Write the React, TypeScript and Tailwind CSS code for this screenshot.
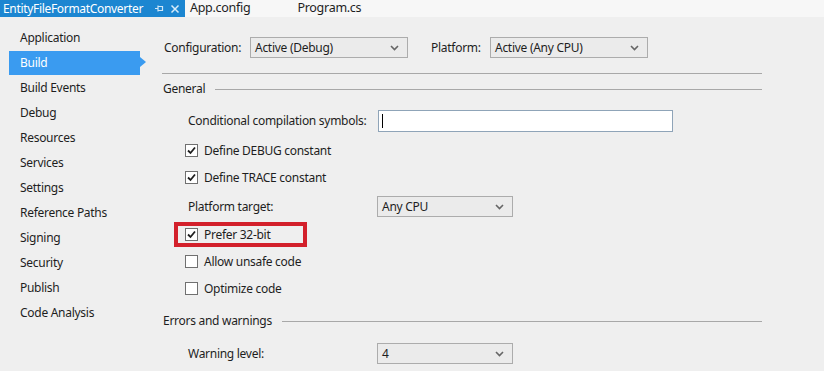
import { useState } from 'react';

const pages = [
  'Application',
  'Build',
  'Build Events',
  'Debug',
  'Resources',
  'Services',
  'Settings',
  'Reference Paths',
  'Signing',
  'Security',
  'Publish',
  'Code Analysis',
];

const Chevron = () => (
  <svg width="9" height="6" viewBox="0 0 9 6" className="shrink-0">
    <path d="M1 1 L4.5 4.5 L8 1" fill="none" stroke="#666" strokeWidth="1.6" />
  </svg>
);

const Dropdown = ({ value, className }: { value: string; className: string }) => (
  <div
    className={`h-[21px] flex items-center justify-between border border-[#acacac] bg-[#ebebeb] pl-[4px] pr-[8px] ${className}`}
  >
    <span>{value}</span>
    <Chevron />
  </div>
);

const Check = ({ checked }: { checked: boolean }) => (
  <div className="w-[13px] h-[13px] border border-[#707070] bg-white flex items-center justify-center shrink-0">
    {checked && (
      <svg width="9" height="9" viewBox="0 0 9 9">
        <path d="M1 4.5 L3.5 7 L8 1.5" fill="none" stroke="#1e1e1e" strokeWidth="1.8" />
      </svg>
    )}
  </div>
);

const CheckRow = ({ label, checked }: { label: string; checked: boolean }) => (
  <div className="h-[27px] flex items-center pl-[23px] gap-[6px]">
    <Check checked={checked} />
    <span>{label}</span>
  </div>
);

const Section = ({ title }: { title: string }) => (
  <div className="h-[16px] flex items-center pl-[1px]">
    <span>{title}</span>
    <div className="flex-1 h-px bg-[#a8a8a8] ml-[10px]" />
  </div>
);

export default function App() {
  const [active, setActive] = useState(1);

  return (
    <div className="w-[824px] h-[371px] overflow-hidden bg-[#efefef] text-[12px] tracking-[-0.28px] text-[#1e1e1e] font-['Noto_Sans',sans-serif] leading-none">
      {/* document tabs */}
      <div className="h-[17px] flex items-center bg-[#f7f7f7] text-[12.5px]">
        <div className="h-full w-[185px] shrink-0 bg-[#1c86d1] text-white flex items-center pl-[3px]">
          <span className="text-[12px] tracking-[-0.32px]">EntityFileFormatConverter</span>
          <svg width="10" height="9" viewBox="0 0 10 9" className="ml-[11px] shrink-0">
            <path d="M1 4.5 H4 M4 1.5 V7.5 M4 2.5 H8.5 V6.5 H4" fill="none" stroke="#cfe6f7" strokeWidth="1.2" />
          </svg>
          <svg width="10" height="10" viewBox="0 0 10 10" className="ml-[6px] shrink-0">
            <path d="M1.5 1.5 L8.5 8.5 M8.5 1.5 L1.5 8.5" stroke="#d8ecfa" strokeWidth="1.5" />
          </svg>
        </div>
        <span className="ml-[5px]">App.config</span>
        <span className="ml-[47px]">Program.cs</span>
      </div>

      <div className="flex">
        {/* property pages */}
        <div className="w-[150px] pt-[8px]">
          {pages.map((p, i) => (
            <div key={p} className="h-[25px] relative flex items-center cursor-default" onClick={() => setActive(i)}>
              {i === active ? (
                <>
                  <div className="ml-[9px] w-[131px] h-[24px] bg-[#3a9bf0] text-white flex items-center pl-[11px]">
                    {p}
                  </div>
                  <div className="absolute left-[140px] top-[7px] w-0 h-0 border-y-[5px] border-y-transparent border-l-[6px] border-l-[#3a9bf0]" />
                </>
              ) : (
                <span className="pl-[20px]">{p}</span>
              )}
            </div>
          ))}
        </div>

        {/* build page */}
        <div className="flex-1 pl-[12px] pr-[62px] flex flex-col">
          <div className="mt-[20px] h-[21px] flex items-center">
            <span className="ml-[2px] w-[86px]">Configuration:</span>
            <Dropdown value="Active (Debug)" className="w-[158px]" />
            <span className="ml-[23px] w-[59px]">Platform:</span>
            <Dropdown value="Active (Any CPU)" className="w-[158px]" />
          </div>

          <div className="mt-[15px] h-px bg-[#a8a8a8]" />

          <div className="mt-[7px]">
            <Section title="General" />
          </div>

          <div className="mt-[13px] h-[22px] flex items-center pl-[26px]">
            <span className="w-[190px]">Conditional compilation symbols:</span>
            <div className="w-[295px] h-[22px] border border-[#8fa4b8] bg-white flex items-center pl-[3px]">
              <div className="w-px h-[14px] bg-black" />
            </div>
          </div>

          <div className="mt-[5px]">
            <CheckRow label="Define DEBUG constant" checked />
            <CheckRow label="Define TRACE constant" checked />
          </div>

          <div className="mt-[5px] h-[21px] flex items-center pl-[26px]">
            <span className="w-[189px]">Platform target:</span>
            <Dropdown value="Any CPU" className="w-[136px]" />
          </div>

          <div className="mt-[4px]">
            <div className="relative">
              <CheckRow label="Prefer 32-bit" checked />
              <div className="absolute left-[12px] top-[1px] w-[133px] h-[25px] border-[4px] border-[#d3202b]" />
            </div>
            <CheckRow label="Allow unsafe code" checked={false} />
            <CheckRow label="Optimize code" checked={false} />
          </div>

          <div className="mt-[11px]">
            <Section title="Errors and warnings" />
          </div>

          <div className="mt-[14px] h-[21px] flex items-center pl-[26px]">
            <span className="w-[189px]">Warning level:</span>
            <Dropdown value="4" className="w-[136px]" />
          </div>
        </div>
      </div>
    </div>
  );
}
